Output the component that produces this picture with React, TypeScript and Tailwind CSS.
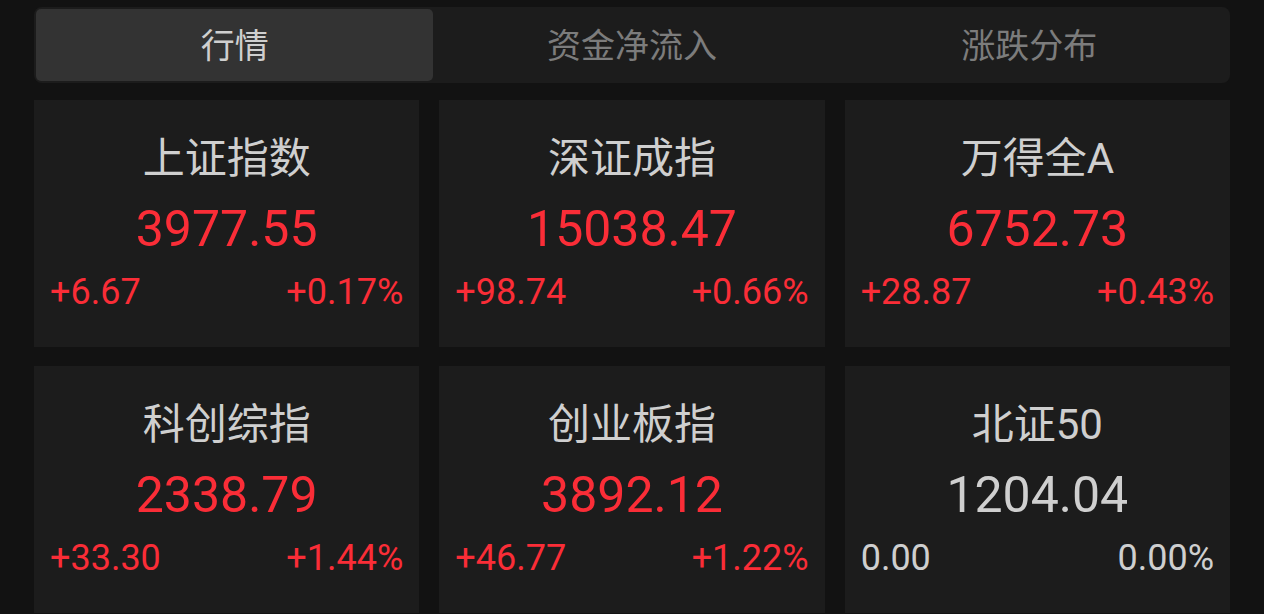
import React from 'react';

type Quote = {
  name: string;
  price: string;
  change: string;
  pct: string;
  up: boolean;
};

const quotes: Quote[] = [
  { name: '上证指数', price: '3977.55', change: '+6.67', pct: '+0.17%', up: true },
  { name: '深证成指', price: '15038.47', change: '+98.74', pct: '+0.66%', up: true },
  { name: '万得全A', price: '6752.73', change: '+28.87', pct: '+0.43%', up: true },
  { name: '科创综指', price: '2338.79', change: '+33.30', pct: '+1.44%', up: true },
  { name: '创业板指', price: '3892.12', change: '+46.77', pct: '+1.22%', up: true },
  { name: '北证50', price: '1204.04', change: '0.00', pct: '0.00%', up: false },
];

const tabs = ['行情', '资金净流入', '涨跌分布'];

const font = { fontFamily: 'Roboto, "Noto Sans CJK SC", sans-serif' };

const QuoteCard: React.FC<{ q: Quote }> = ({ q }) => {
  const tone = q.up ? 'text-[#fa2d37]' : 'text-[#cfcfcf]';
  return (
    <div className="bg-[#1c1c1c] h-[247px] flex flex-col items-center pt-[34px] px-[16px]">
      <div className="text-[42px] leading-[50px] text-[#cfcfcf]">{q.name}</div>
      <div className={`text-[50px] leading-[60px] mt-[15px] ${tone}`}>{q.price}</div>
      <div className={`w-full flex justify-between text-[36px] leading-[40px] mt-[13px] ${tone}`}>
        <span>{q.change}</span>
        <span>{q.pct}</span>
      </div>
    </div>
  );
};

export default function App() {
  return (
    <div className="min-h-screen h-[614px] overflow-hidden bg-[#121212] px-[34px] pt-[7px]" style={font}>
      {/* segmented tabs */}
      <div className="bg-[#1c1c1c] rounded-[8px] p-[2px] grid grid-cols-3 h-[76px]">
        {tabs.map((t, i) => (
          <div
            key={t}
            className={`flex items-center justify-center rounded-[5px] text-[34px] pt-[3px] ${
              i === 0 ? 'bg-[#333333] text-[#cfcfcf]' : 'text-[#7c7c7c]'
            }`}
          >
            {t}
          </div>
        ))}
      </div>

      <div className="grid grid-cols-3 gap-x-[20px] gap-y-[19px] mt-[17px]">
        {quotes.map((q) => (
          <QuoteCard key={q.name} q={q} />
        ))}
      </div>
    </div>
  );
}
